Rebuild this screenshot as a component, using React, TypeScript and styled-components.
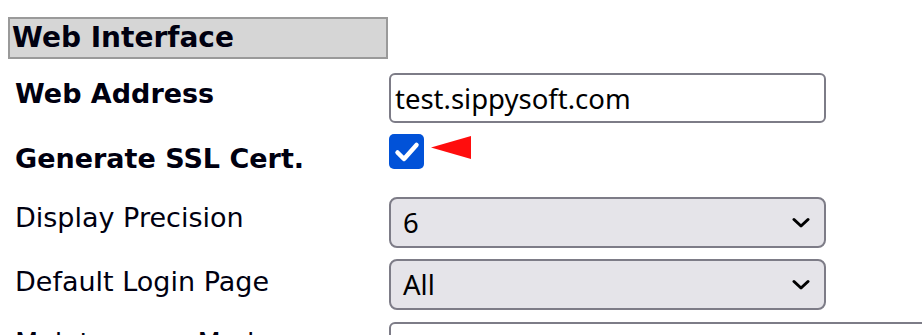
import React from "react";
import styled, { createGlobalStyle } from "styled-components";

const Global = createGlobalStyle`
  html, body { margin: 0; padding: 0; background: #ffffff; }
  body { font-family: "DejaVu Sans", Verdana, sans-serif; color: #000; }
`;

const Page = styled.div`
  padding: 17px 0 0 8px;
  width: 922px;
  height: 335px;
  box-sizing: border-box;
  overflow: hidden;
`;

const SectionHeader = styled.div`
  width: 380px;
  height: 42px;
  box-sizing: border-box;
  border: 2px solid #9a9a9a;
  background: #d6d6d6;
  padding: 3px 0 0 2px;
  font-size: 28px;
  font-weight: bold;
  line-height: 32px;
  color: #000010;
  white-space: nowrap;
`;

const Rows = styled.div`
  display: flex;
  flex-direction: column;
  gap: 11px;
  margin-top: 14px;
`;

const Row = styled.div<{ $h: number }>`
  display: grid;
  grid-template-columns: 381px 1fr;
  align-items: start;
  height: ${(p) => p.$h}px;
`;

const Label = styled.div<{ $bold?: boolean; $pt: number }>`
  padding: ${(p) => p.$pt}px 0 0 7px;
  font-size: 27px;
  line-height: 31px;
  font-weight: ${(p) => (p.$bold ? "bold" : "normal")};
  color: #000010;
  white-space: nowrap;
`;

const TextInput = styled.input<{ $w: number }>`
  width: ${(p) => p.$w}px;
  height: 50px;
  box-sizing: border-box;
  border: 2px solid #7d7c87;
  border-radius: 6px;
  background: #fff;
  padding: 0 0 0 4px;
  font-family: "Noto Sans", "Open Sans", sans-serif;
  font-size: 27.5px;
  color: #000;
  outline: none;
`;

const SelectBox = styled.div`
  width: 437px;
  height: 51px;
  box-sizing: border-box;
  border: 2px solid #7d7c87;
  border-radius: 8px;
  background: #e5e4e9;
  display: flex;
  align-items: center;
  justify-content: space-between;
  padding: 0 14px 0 12px;
  font-family: "Noto Sans", "Open Sans", sans-serif;
  font-size: 27.5px;
  color: #000;
`;

const CheckWrap = styled.div`
  display: flex;
  align-items: flex-start;
  gap: 7px;
`;

const CheckBox = styled.span`
  width: 35px;
  height: 35px;
  border-radius: 5px;
  background: #0152d8;
  display: flex;
  align-items: center;
  justify-content: center;
`;

const Pointer = styled.svg`
  display: block;
  margin-top: 2px;
`;

const Chevron = () => (
  <svg width="18" height="12" viewBox="0 0 18 12">
    <path d="M2 2.5 L9 9 L16 2.5" fill="none" stroke="#000" strokeWidth="3" strokeLinecap="round" strokeLinejoin="round" />
  </svg>
);

export default function App() {
  return (
    <>
      <Global />
      <Page>
        <SectionHeader>Web Interface</SectionHeader>
        <Rows>
          <Row $h={50}>
            <Label $bold $pt={5}>Web Address</Label>
            <TextInput $w={437} defaultValue="test.sippysoft.com" readOnly />
          </Row>
          <Row $h={52}>
            <Label $bold $pt={9}>Generate SSL Cert.</Label>
            <CheckWrap>
              <CheckBox>
                <svg width="35" height="35" viewBox="0 0 35 35">
                  <path d="M8.5 18.5 L15 25 L27.5 11" fill="none" stroke="#fff" strokeWidth="4.5" strokeLinecap="round" strokeLinejoin="round" />
                </svg>
              </CheckBox>
              <Pointer width="40" height="23" viewBox="0 0 40 23">
                <polygon points="0,11.5 40,0 40,23" fill="#ff0d0d" />
              </Pointer>
            </CheckWrap>
          </Row>
          <Row $h={51}>
            <Label $pt={5}>Display Precision</Label>
            <SelectBox>
              <span>6</span>
              <Chevron />
            </SelectBox>
          </Row>
          <Row $h={52}>
            <Label $pt={7}>Default Login Page</Label>
            <SelectBox>
              <span>All</span>
              <Chevron />
            </SelectBox>
          </Row>
          <Row $h={50}>
            <Label $pt={5}>Maintenance Mode</Label>
            <TextInput $w={560} defaultValue="" readOnly />
          </Row>
        </Rows>
      </Page>
    </>
  );
}
